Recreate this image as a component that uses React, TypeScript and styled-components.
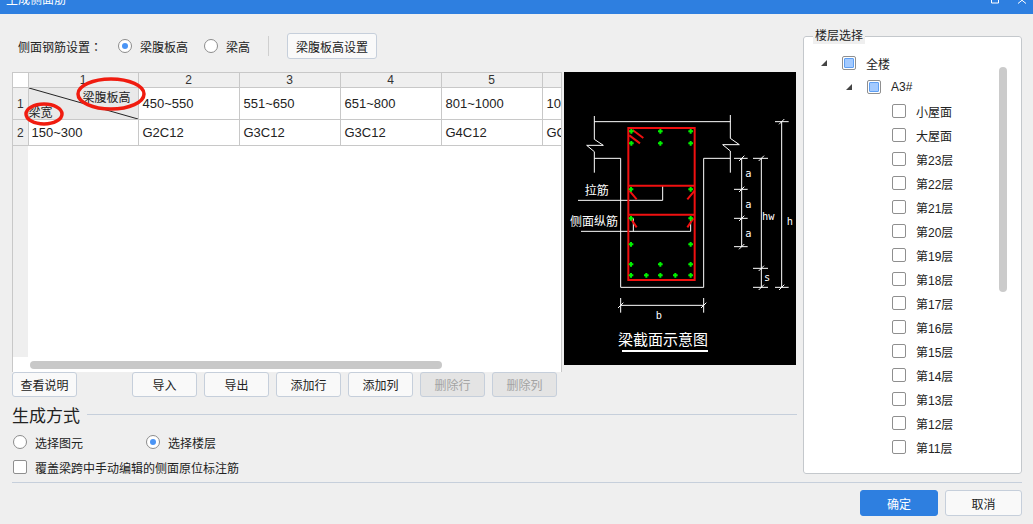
import React from 'react';
import styled, { createGlobalStyle } from 'styled-components';

const GlobalStyle = createGlobalStyle`
  html, body {
    margin: 0;
    padding: 0;
    background: #efefef;
  }
  body {
    font-family: "Liberation Sans", "Noto Sans CJK SC", sans-serif;
    font-size: 12px;
    color: #222;
    overflow: hidden;
  }
`;

const Dialog = styled.div`
  width: 1033px;
  height: 524px;
  background: #efefef;
  overflow: hidden;
`;

const TitleBar = styled.div`
  height: 14px;
  background: #2e7fe0;
  color: #fff;
  display: flex;
  justify-content: space-between;
  padding: 0 5px 0 6px;
  overflow: hidden;
`;

const TitleText = styled.div`
  margin-top: -9px;
  line-height: 18px;
`;

const WindowIcons = styled.svg`
  width: 40px;
  height: 14px;
`;

const Body = styled.div`
  display: flex;
  gap: 6px;
  padding: 0 11px 0 12px;
  height: 468px;
`;

const LeftColumn = styled.div`
  width: 785px;
  display: flex;
  flex-direction: column;
`;

const Toolbar = styled.div`
  display: flex;
  align-items: center;
  height: 26px;
  margin-top: 19px;
  padding-left: 6px;
`;

const ToolbarLabel = styled.span`
  width: 100px;
`;

const Colon = styled.span`
  font-family: "Noto Sans CJK TC", sans-serif;
`;

const RadioLabel = styled.label<{ $width?: number }>`
  display: flex;
  align-items: center;
  gap: 8px;
  width: ${(p) => (p.$width ? `${p.$width}px` : 'auto')};
`;

const RadioDot = styled.span<{ $on?: boolean }>`
  box-sizing: border-box;
  width: 14px;
  height: 14px;
  border-radius: 50%;
  border: 1px solid #8c8c8c;
  background: #fff;
  display: flex;
  align-items: center;
  justify-content: center;
  flex: none;
  &::after {
    content: '';
    display: ${(p) => (p.$on ? 'block' : 'none')};
    width: 6px;
    height: 6px;
    border-radius: 50%;
    background: #4a94f5;
  }
`;

const Separator = styled.span`
  width: 1px;
  height: 20px;
  background: #cfcfcf;
  margin: 0 18px;
`;

const Button = styled.button<{ $w?: number; $h?: number; $primary?: boolean }>`
  box-sizing: border-box;
  width: ${(p) => p.$w ?? 65}px;
  height: ${(p) => p.$h ?? 25}px;
  padding: 0;
  border-radius: 3px;
  font: inherit;
  flex: none;
  border: 1px solid ${(p) => (p.$primary ? '#2e7fe0' : '#c6cfdb')};
  background: ${(p) => (p.$primary ? '#2e7fe0' : '#f9f9f9')};
  color: ${(p) => (p.$primary ? '#fff' : '#222')};
  &:disabled {
    background: #e4e4e4;
    color: #a3a3a3;
  }
`;

const ContentRow = styled.div`
  display: flex;
  gap: 2px;
  margin-top: 13px;
  align-items: flex-start;
`;

const TableFrame = styled.div`
  box-sizing: border-box;
  position: relative;
  width: 550px;
  height: 300px;
  border: 1px solid #c8c8c8;
  border-bottom: none;
  background: #fff;
  overflow: hidden;
`;

const Grid = styled.table`
  border-collapse: collapse;
  table-layout: fixed;
  width: 630px;
  font-size: 13px;
  color: #222;
`;

const HeadCell = styled.th`
  height: 14px;
  padding: 0;
  background: #efefef;
  border: 1px solid #c8c8c8;
  border-top: none;
  font-weight: normal;
  font-size: 12px;
  line-height: 14px;
  color: #333;
`;

const Corner = styled.th`
  background: #fff;
  padding: 0;
`;

const RowHead = styled.th<{ $h: number }>`
  height: ${(p) => p.$h}px;
  padding: 0;
  background: #efefef;
  border: 1px solid #c8c8c8;
  border-left: none;
  font-weight: normal;
  font-size: 12px;
  color: #333;
`;

const Filler = styled.th`
  height: 211px;
  padding: 0;
  background: #efefef;
`;

const Cell = styled.td<{ $pad?: number }>`
  padding: 0 0 0 ${(p) => p.$pad ?? 4}px;
  border: 1px solid #c8c8c8;
  white-space: nowrap;
  overflow: hidden;
`;

const SplitCell = styled.td`
  position: relative;
  padding: 0;
  background: #e9e9e9;
  border: 1px solid #c8c8c8;
`;

const SplitLine = styled.svg`
  position: absolute;
  inset: 0;
  width: 100%;
  height: 100%;
`;

const SplitTop = styled.span`
  position: absolute;
  left: 54px;
  top: 0;
  font-size: 12px;
`;

const SplitBottom = styled.span`
  position: absolute;
  left: 0;
  top: 15px;
  font-size: 12px;
`;

const Annotations = styled.svg`
  position: absolute;
  left: -1px;
  top: -1px;
  width: 200px;
  height: 60px;
`;

const ScrollThumb = styled.div`
  position: absolute;
  left: 17px;
  top: 288px;
  width: 412px;
  height: 8px;
  border-radius: 4px;
  background: #c8c8c8;
`;

const Diagram = styled.svg`
  display: block;
  width: 232px;
  height: 293px;
  background: #000;
`;

const ActionRow = styled.div`
  display: flex;
  gap: 7px;
`;

const SpecButton = styled(Button)`
  margin-right: 48px;
`;

const SectionHead = styled.div`
  display: flex;
  align-items: center;
  gap: 7px;
  height: 24px;
  margin-top: 5px;
  font-size: 17px;
  color: #222;
  &::after {
    content: '';
    flex: 1;
    height: 1px;
    background: #c6cfdb;
  }
`;

const ModeRow = styled.div`
  display: flex;
  align-items: center;
  height: 20px;
  margin-top: 6px;
  padding-left: 1px;
`;

const OverrideRow = styled.label`
  display: flex;
  align-items: center;
  gap: 8px;
  height: 20px;
  margin-top: 5px;
  padding-left: 1px;
`;

const Box = styled.span<{ $on?: boolean }>`
  box-sizing: border-box;
  display: block;
  flex: none;
  width: 14px;
  height: 14px;
  padding: 1px;
  border: 1px solid #8f8f8f;
  border-radius: 2px;
  background: #fff;
  &::after {
    content: '';
    display: ${(p) => (p.$on ? 'block' : 'none')};
    box-sizing: border-box;
    width: 10px;
    height: 10px;
    border-radius: 1px;
    border: 1px solid #5f9ff2;
    background: #a3caff;
  }
`;

const FloorPanel = styled.fieldset`
  box-sizing: border-box;
  position: relative;
  margin: 14px 0 0;
  padding: 0;
  width: 219px;
  height: 446px;
  border: 1px solid #c4c8cc;
  border-radius: 3px;
  background: #fff;
  min-width: 0;
`;

const PanelLegend = styled.legend`
  margin-left: 9px;
  padding: 0 2px;
  line-height: 16px;
  background: #efefef;
  font-size: 12px;
`;

const FloorTree = styled.div`
  padding-top: 7px;
  height: 420px;
  overflow: hidden;
`;

const TreeRow = styled.div<{ $indent: number }>`
  display: flex;
  align-items: center;
  height: 24px;
  padding-left: ${(p) => p.$indent}px;
`;

const Caret = styled.svg`
  width: 6px;
  height: 6px;
  margin-right: 15px;
  flex: none;
`;

const TreeLabel = styled.span`
  margin-left: 10px;
`;

const PanelThumb = styled.div`
  position: absolute;
  left: 195px;
  top: 23px;
  width: 8px;
  height: 225px;
  border-radius: 4px;
  background: #cbcbcb;
`;

const Divider = styled.div`
  height: 1px;
  margin: 0 11px 0 12px;
  background: #c6cfdb;
`;

const Footer = styled.div`
  display: flex;
  justify-content: flex-end;
  gap: 7px;
  padding: 7px 11px 0 0;
`;

const columns = ['1', '2', '3', '4', '5', '6'];
const limits = ['450~550', '551~650', '651~800', '801~1000', '1000~1200'];
const bars = ['G2C12', 'G3C12', 'G3C12', 'G4C12', 'GC12'];
const actions = ['导入', '导出', '添加行', '添加列'];
const floors = ['小屋面', '大屋面', ...Array.from({ length: 13 }, (_, i) => `第${23 - i}层`)];

const dots: [number, number][] = [
  [214, 184], [301, 184], [392, 184], [214, 220], [301, 220], [392, 220],
  [213, 358], [392, 358], [213, 445], [392, 445], [213, 523], [392, 523],
  [213, 583], [301, 583], [392, 583], [213, 616], [259, 616], [301, 616], [346, 616], [392, 616],
];

const ticks: [number, number][] = [
  [182, 706], [431, 706], [545, 265], [545, 358], [545, 445], [545, 530],
  [604, 265], [604, 595], [604, 652], [665, 155], [665, 652],
];

const BeamDiagram: React.FC = () => (
  <Diagram viewBox="12 6 696 879">
    <g fill="none" stroke="#fff" strokeWidth="3">
      <path d="M103 155H511M103 138V208L130 226H80L103 245V308M511 135V205L538 224H488L511 243V308" />
      <path d="M103 265H182V652H431V265H511" />
      <path d="M182 684V728M431 684V728M182 706H431" />
      <path d="M522 265H563M522 358H563M522 445H563M522 530H563M545 265V530" />
      <path d="M579 265H624M579 595H624M579 652H624M604 265V652" />
      <path d="M645 155H686M645 652H686M665 155V652" />
      <path d="M54 391H308V347M63 484H392V445M220 445V484" />
      {ticks.map(([x, y]) => (
        <path key={`${x}-${y}`} d={`M${x - 8} ${y + 8}L${x + 8} ${y - 8}`} />
      ))}
    </g>
    <g fill="none" stroke="#f01010" strokeWidth="6">
      <rect x="205" y="174" width="199" height="456" />
      <path d="M205 347H404M205 434H404" />
      <path d="M218 180L250 204M208 196L240 220M208 362L230 388M404 362L382 388M212 445L230 472M400 445L382 472" />
    </g>
    <g fill="#00f000">
      {dots.map(([x, y]) => (
        <path key={`${x}-${y}`} d={`M${x - 3} ${y - 7}h6v4h4v6h-4v4h-6v-4h-4v-6h4z`} />
      ))}
    </g>
    <g fill="#fff" fontFamily="'Noto Sans CJK SC', sans-serif" fontSize="36">
      <text x="74" y="375">拉筋</text>
      <text x="30" y="468">侧面纵筋</text>
      <text x="174" y="825" fontSize="45">梁截面示意图</text>
    </g>
    <g fill="#fff" fontFamily="'DejaVu Sans Mono', monospace" fontSize="31">
      <text x="556" y="321">a</text>
      <text x="556" y="414">a</text>
      <text x="556" y="501">a</text>
      <text x="606" y="449">hw</text>
      <text x="612" y="633">s</text>
      <text x="680" y="464">h</text>
      <text x="287" y="747">b</text>
    </g>
    <rect x="186" y="840" width="258" height="6" fill="#fff" />
  </Diagram>
);

const App: React.FC = () => (
  <Dialog>
    <GlobalStyle />
    <TitleBar>
      <TitleText>生成侧面筋</TitleText>
      <WindowIcons viewBox="0 0 40 14">
        <path d="M3.500 -3h7v6h-7zM30 -3l8 6.500M38 -3l-8 6.500" fill="none" stroke="#fff" />
      </WindowIcons>
    </TitleBar>
    <Body>
      <LeftColumn>
        <Toolbar>
          <ToolbarLabel>侧面钢筋设置<Colon>：</Colon></ToolbarLabel>
          <RadioLabel $width={86}><RadioDot $on />梁腹板高</RadioLabel>
          <RadioLabel><RadioDot />梁高</RadioLabel>
          <Separator />
          <Button $w={90} $h={26}>梁腹板高设置</Button>
        </Toolbar>
        <ContentRow>
          <TableFrame>
            <Grid>
              <colgroup>
                <col style={{ width: 15 }} />
                <col style={{ width: 110 }} />
                {columns.slice(1).map((c) => <col key={c} style={{ width: 101 }} />)}
              </colgroup>
              <thead>
                <tr>
                  <Corner />
                  {columns.map((c) => <HeadCell key={c}>{c}</HeadCell>)}
                </tr>
              </thead>
              <tbody>
                <tr>
                  <RowHead $h={31}>1</RowHead>
                  <SplitCell>
                    <SplitLine viewBox="0 0 110 31" preserveAspectRatio="none">
                      <line x1="0" y1="0" x2="110" y2="31" stroke="#222" />
                    </SplitLine>
                    <SplitTop>梁腹板高</SplitTop>
                    <SplitBottom>梁宽</SplitBottom>
                  </SplitCell>
                  {limits.map((v) => <Cell key={v}>{v}</Cell>)}
                </tr>
                <tr>
                  <RowHead $h={25}>2</RowHead>
                  <Cell $pad={3}>150~300</Cell>
                  {bars.map((v, i) => <Cell key={i}>{v}</Cell>)}
                </tr>
                <tr>
                  <Filler />
                  <td colSpan={6} />
                </tr>
              </tbody>
            </Grid>
            <Annotations viewBox="0 0 200 60">
              <g fill="none" stroke="#f01c10" strokeWidth="3.500">
                <ellipse cx="99" cy="22" rx="33" ry="15" />
                <ellipse cx="32" cy="42" rx="18" ry="10" />
              </g>
            </Annotations>
            <ScrollThumb />
          </TableFrame>
          <BeamDiagram />
        </ContentRow>
        <ActionRow>
          <SpecButton>查看说明</SpecButton>
          {actions.map((a) => <Button key={a}>{a}</Button>)}
          <Button disabled>删除行</Button>
          <Button disabled>删除列</Button>
        </ActionRow>
        <SectionHead>生成方式</SectionHead>
        <ModeRow>
          <RadioLabel $width={133}><RadioDot />选择图元</RadioLabel>
          <RadioLabel><RadioDot $on />选择楼层</RadioLabel>
        </ModeRow>
        <OverrideRow><Box />覆盖梁跨中手动编辑的侧面原位标注筋</OverrideRow>
      </LeftColumn>
      <FloorPanel>
        <PanelLegend>楼层选择</PanelLegend>
        <FloorTree>
          <TreeRow $indent={17}>
            <Caret viewBox="0 0 6 6"><polygon points="6,0 6,6 0,6" fill="#444" /></Caret>
            <Box $on /><TreeLabel>全楼</TreeLabel>
          </TreeRow>
          <TreeRow $indent={42}>
            <Caret viewBox="0 0 6 6"><polygon points="6,0 6,6 0,6" fill="#444" /></Caret>
            <Box $on /><TreeLabel>A3#</TreeLabel>
          </TreeRow>
          {floors.map((f) => (
            <TreeRow key={f} $indent={88}>
              <Box /><TreeLabel>{f}</TreeLabel>
            </TreeRow>
          ))}
        </FloorTree>
        <PanelThumb />
      </FloorPanel>
    </Body>
    <Divider />
    <Footer>
      <Button $w={78} $h={26} $primary>确定</Button>
      <Button $w={77} $h={26}>取消</Button>
    </Footer>
  </Dialog>
);

export default App;
